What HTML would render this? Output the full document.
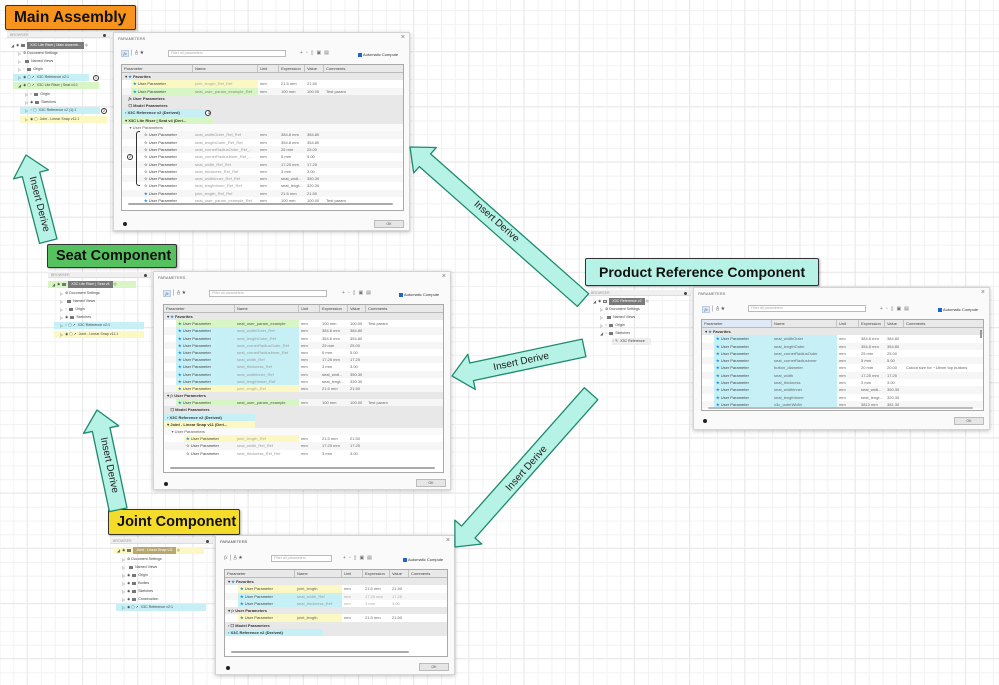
<!DOCTYPE html>
<html><head><meta charset="utf-8">
<style>
*{box-sizing:border-box;margin:0;padding:0}
body{width:999px;height:685px;overflow:hidden;position:relative;font-family:"Liberation Sans",sans-serif;background:#fff;
background-image:linear-gradient(#e9e9e9 1.2px,transparent 1.2px),linear-gradient(90deg,#e9e9e9 1.2px,transparent 1.2px),linear-gradient(#f2f2f2 1px,transparent 1px),linear-gradient(90deg,#f2f2f2 1px,transparent 1px);
background-size:55.2px 55.2px,55.2px 55.2px,13.8px 13.8px,13.8px 13.8px;
background-position:0 51px,26.8px 0,0 10.1px,13.3px 0}
.lbl{position:absolute;border:1.5px solid #333;border-radius:2px;font-weight:bold;color:#111;display:flex;align-items:center;padding-left:8px;box-shadow:1px 1px 2px rgba(0,0,0,.3)}
.dlg{position:absolute;background:#fafafa;border:1px solid #d4d4d4;box-shadow:0 1px 4px rgba(0,0,0,.25);font-size:4px;color:#555}
.dlg .ttl{position:absolute;left:4px;top:3px;font-size:4px;color:#666}
.dlg .x{position:absolute;right:4px;top:1px;font-size:7px;color:#777}
.tb{position:absolute;height:8px;font-size:5px;color:#555;display:flex;align-items:center}
.fx{width:8px;height:7px;background:#dbe8f6;border:1px solid #b9cde6;font-style:italic;font-size:4.5px;text-align:center;line-height:6px;color:#555;font-family:"Liberation Serif",serif}
.filt{position:absolute;height:7px;border:1px solid #bbb;background:#fff;font-size:3.6px;color:#aaa;padding-left:2px;line-height:5px}
.ac{position:absolute;font-size:4px;color:#333;display:flex;align-items:center}
.ac b{display:inline-block;width:4px;height:4px;background:#1e66c8;margin-right:1px}
.tbl{position:absolute;background:#fff;border:1px solid #a9a9a9;overflow:hidden}
.hd{display:flex;height:8px;background:#e9e9e9;border-bottom:1px solid #bbb;font-size:4px;line-height:8px;color:#444}
.hd span{border-right:1px solid #c4c4c4;padding-left:2px;overflow:hidden;white-space:nowrap}
.r{display:flex;font-size:4px;color:#666;white-space:nowrap}
.r:nth-child(odd){background:#f6f6f6}
.r span{overflow:hidden;padding-left:2px}
.r .c1{display:flex;padding-left:0;color:#444}
.r .c1 i{font-style:normal;display:block;flex:1;padding-left:2px}
.s{background:#e8e8e8!important;color:#333;font-weight:bold}
.s span{overflow:visible}
.st{color:#1f8fe0}
.so{color:#777}
.hy{background:#fbf8c4!important}.hg{background:#d8f5c6!important}.hc{background:#c6f0f6!important}
.ok{position:absolute;height:8px;background:#e6e6e6;border:1px solid #bbb;font-size:3.6px;text-align:center;line-height:7px;color:#555}
.info{position:absolute;width:4px;height:4px;border-radius:50%;background:#222}
.sb{position:absolute;height:2px;background:#aaa;border-radius:1px}
.br{position:absolute;font-size:3.6px;color:#444}
.br .h{height:6px;background:#f0f0f0;border-bottom:1px solid #ddd;color:#999;padding-left:3px;line-height:6px;position:relative}
.br .h:after{content:"";position:absolute;right:4px;top:1.5px;width:3px;height:3px;border-radius:50%;background:#444}
.br .t{position:absolute;height:7px;line-height:7px;white-space:nowrap;display:flex;align-items:center}
.br .t .ic{display:inline-block;width:4px;height:3.5px;background:#777;margin:0 2px}
.br .t .tri{color:#666;font-size:4px;margin-right:2px}
.root{background:#7a7a7a;color:#fff;padding:0 3px}
.circ{display:inline-block;width:6px;height:6px;border:0.7px solid #333;border-radius:50%;font-size:3.5px;line-height:5px;text-align:center;color:#222;background:#fff}
</style></head><body>

<div class="lbl" style="left:5px;top:5px;width:131px;height:25px;background:#f7941e;font-size:15.5px">Main Assembly</div>
<div class="lbl" style="left:47px;top:244px;width:130px;height:24px;background:#56c15f;font-size:14.5px">Seat Component</div>
<div class="lbl" style="left:585px;top:258px;width:234px;height:28px;background:#b7f2e6;font-size:14px;padding-left:13px">Product Reference Component</div>
<div class="lbl" style="left:108px;top:509px;width:132px;height:26px;background:#f6dc2a;font-size:14.5px">Joint Component</div>

<div class="br" style="left:7px;top:32px;width:103px;height:93px">
<div class="h">BROWSER</div>
<div class="t" style="left:4px;top:10px"><span class="tri">◢</span>◉<span class="ic"></span><span class="root">X3C Lite Riser | Main Assemb...</span>&nbsp;◎</div>
<div class="t" style="left:11px;top:18px"><span class="tri">▷</span>⚙&nbsp;Document Settings</div>
<div class="t" style="left:11px;top:26px"><span class="tri">▷</span><span class="ic"></span>Named Views</div>
<div class="t" style="left:11px;top:34px"><span class="tri">▷</span>◌<span class="ic"></span>Origin</div>
<div class="t hc" style="left:6px;top:42px;width:76px;padding-left:5px"><span class="tri">▷</span>◉ ▢ ➚&nbsp;&nbsp;X3C Reference v2:1</div>
<div class="t" style="left:86px;top:42px"><span class="circ">1</span></div>
<div class="t hg" style="left:6px;top:50px;width:86px;padding-left:5px"><span class="tri">◢</span>◉ ▢ ➚&nbsp;&nbsp;X3C Lite Riser | Seat v4:1</div>
<div class="t" style="left:18px;top:59px"><span class="tri">▷</span>◌<span class="ic"></span>Origin</div>
<div class="t" style="left:18px;top:67px"><span class="tri">▷</span>◉<span class="ic"></span>Sketches</div>
<div class="t hc" style="left:13px;top:75px;width:80px;padding-left:5px"><span class="tri">▷</span>◌ ▢&nbsp;&nbsp;X3C Reference v2 (1):1</div>
<div class="t" style="left:94px;top:75px"><span class="circ">2</span></div>
<div class="t hy" style="left:13px;top:84px;width:87px;padding-left:5px"><span class="tri">▷</span>◉ ▢&nbsp;&nbsp;Joint - Linear Snap v11:1</div>
</div>

<style>
#d1 .c1{width:71px}#d1 .c2{width:65px}#d1 .c3{width:21px}#d1 .c4{width:26px}#d1 .c5{width:19px}#d1 .c6{flex:1}
#d1 .r{height:7.3px;line-height:7.3px}
</style>
<div class="dlg" id="d1" style="left:113px;top:32px;width:297px;height:199px">
<div class="ttl">PARAMETERS</div><div class="x">×</div>
<div class="tb" style="left:7px;top:16px"><div class="fx">fx</div>&nbsp;│&nbsp;<span style="color:#888">A̲</span>&nbsp;★</div>
<div class="filt" style="left:54px;top:17px;width:118px">Filter all parameters</div>
<div class="tb" style="left:186px;top:16px;color:#777;letter-spacing:3px">+▫▯▣▤</div>
<div class="ac" style="left:244px;top:19px"><b></b>Automatic Compute</div>
<div class="tbl" style="left:7px;top:31px;width:283px;height:147px">
<div class="hd"><span class="c1" style="width:71px">Parameter</span><span style="width:65px">Name</span><span style="width:21px">Unit</span><span style="width:26px">Expression</span><span style="width:19px">Value</span><span style="flex:1;border:0">Comments</span></div>
<div>
<div class="r s"><span>&nbsp;▾ <b class="st">★</b> Favorites</span></div>
<div class="r"><span class="c1" style="padding-left:9px"><i class="hy"><b class="st">★</b> User Parameter</i></span><span class="c2 hy" style="color:#aaa">joint_length_Ref_Ref</span><span class="c3">mm</span><span class="c4">21.5 mm</span><span class="c5">21.50</span><span class="c6"></span></div>
<div class="r"><span class="c1" style="padding-left:9px"><i class="hg"><b class="st">★</b> User Parameter</i></span><span class="c2 hg" style="color:#888">seat_user_param_example_Ref</span><span class="c3">mm</span><span class="c4">100 mm</span><span class="c5">100.00</span><span class="c6">Test param</span></div>
<div class="r s"><span>&nbsp;&nbsp;&nbsp;&nbsp;<i style="font-family:serif">fx</i> User Parameters</span></div>
<div class="r s"><span>&nbsp;&nbsp;&nbsp;&nbsp;☐ Model Parameters</span></div>
<div class="r s" style="position:relative"><span class="hc" style="width:84px">&nbsp;› X3C Reference v2 (Derived)</span><span style="position:absolute;left:83px;top:0.5px" class="circ">1</span></div>
<div class="r s"><span class="hg" style="width:91px">&nbsp;▾ X3C Lite Riser | Seat v4 (Deri...</span></div>
<div class="r" style="background:#fafafa"><span>&nbsp;&nbsp;&nbsp;&nbsp;&nbsp;▾ User Parameters</span></div>
<div class="r"><span class="c1" style="padding-left:20px"><i><b class="so">☆</b> User Parameter</i></span><span class="c2" style="color:#999">seat_widthOuter_Ref_Ref</span><span class="c3">mm</span><span class="c4">384.8 mm</span><span class="c5">384.80</span><span class="c6"></span></div>
<div class="r"><span class="c1" style="padding-left:20px"><i><b class="so">☆</b> User Parameter</i></span><span class="c2" style="color:#999">seat_lengthOuter_Ref_Ref</span><span class="c3">mm</span><span class="c4">354.8 mm</span><span class="c5">354.80</span><span class="c6"></span></div>
<div class="r"><span class="c1" style="padding-left:20px"><i><b class="so">☆</b> User Parameter</i></span><span class="c2" style="color:#999">seat_cornerRadiusOuter_Ref_...</span><span class="c3">mm</span><span class="c4">25 mm</span><span class="c5">25.00</span><span class="c6"></span></div>
<div class="r"><span class="c1" style="padding-left:20px"><i><b class="so">☆</b> User Parameter</i></span><span class="c2" style="color:#999">seat_cornerRadiusInner_Ref_...</span><span class="c3">mm</span><span class="c4">5 mm</span><span class="c5">5.00</span><span class="c6"></span></div>
<div class="r"><span class="c1" style="padding-left:20px"><i><b class="so">☆</b> User Parameter</i></span><span class="c2" style="color:#999">seat_width_Ref_Ref</span><span class="c3">mm</span><span class="c4">17.25 mm</span><span class="c5">17.25</span><span class="c6"></span></div>
<div class="r"><span class="c1" style="padding-left:20px"><i><b class="so">☆</b> User Parameter</i></span><span class="c2" style="color:#999">seat_thickness_Ref_Ref</span><span class="c3">mm</span><span class="c4">3 mm</span><span class="c5">3.00</span><span class="c6"></span></div>
<div class="r"><span class="c1" style="padding-left:20px"><i><b class="so">☆</b> User Parameter</i></span><span class="c2" style="color:#999">seat_widthInner_Ref_Ref</span><span class="c3">mm</span><span class="c4">seat_widt...</span><span class="c5">350.30</span><span class="c6"></span></div>
<div class="r"><span class="c1" style="padding-left:20px"><i><b class="so">☆</b> User Parameter</i></span><span class="c2" style="color:#999">seat_lengthInner_Ref_Ref</span><span class="c3">mm</span><span class="c4">seat_lengt...</span><span class="c5">320.30</span><span class="c6"></span></div>
<div class="r"><span class="c1" style="padding-left:20px"><i><b class="st">★</b> User Parameter</i></span><span class="c2" style="color:#999">joint_length_Ref_Ref</span><span class="c3">mm</span><span class="c4">21.5 mm</span><span class="c5">21.50</span><span class="c6"></span></div>
<div class="r"><span class="c1" style="padding-left:20px"><i><b class="st">★</b> User Parameter</i></span><span class="c2" style="color:#999">seat_user_param_example_Ref</span><span class="c3">mm</span><span class="c4">100 mm</span><span class="c5">100.00</span><span class="c6">Test param</span></div>
</div>
<div class="sb" style="left:6px;bottom:5px;width:265px"></div>
</div>
<div style="position:absolute;left:22px;top:98px;width:4px;height:55px;border:0.8px solid #333;border-right:0;border-radius:3px 0 0 3px"></div>
<div style="position:absolute;left:13px;top:121px"><span class="circ">2</span></div>
<div class="info" style="left:9px;top:189px"></div>
<div class="ok" style="left:260px;top:187px;width:30px">OK</div>
</div>

<div class="br" style="left:48px;top:272px;width:103px;height:70px">
<div class="h">BROWSER</div>
<div class="t hg" style="left:0;top:9px;width:88px;padding-left:4px"><span class="tri">◢</span>◉<span class="ic"></span><span class="root">X3C Lite Riser | Seat v4</span>&nbsp;◎</div>
<div class="t" style="left:12px;top:18px"><span class="tri">▷</span>⚙&nbsp;Document Settings</div>
<div class="t" style="left:12px;top:26px"><span class="tri">▷</span><span class="ic"></span>Named Views</div>
<div class="t" style="left:12px;top:34px"><span class="tri">▷</span>◌<span class="ic"></span>Origin</div>
<div class="t" style="left:12px;top:42px"><span class="tri">▷</span>◉<span class="ic"></span>Sketches</div>
<div class="t hc" style="left:6px;top:50px;width:90px;padding-left:6px"><span class="tri">▷</span>◌ ▢ ➚&nbsp;&nbsp;X3C Reference v2:1</div>
<div class="t hy" style="left:6px;top:59px;width:90px;padding-left:6px"><span class="tri">▷</span>◉ ▢ ➚&nbsp;&nbsp;Joint - Linear Snap v11:1</div>
</div>

<style>
#d2 .c1{width:71px}#d2 .c2{width:64px}#d2 .c3{width:21px}#d2 .c4{width:28px}#d2 .c5{width:18px}#d2 .c6{flex:1}
#d2 .r{height:7.2px;line-height:7.2px}
</style>
<div class="dlg" id="d2" style="left:153px;top:271px;width:298px;height:219px">
<div class="ttl">PARAMETERS</div><div class="x">×</div>
<div class="tb" style="left:9px;top:17px"><div class="fx">fx</div>&nbsp;│&nbsp;<span style="color:#888">A̲</span>&nbsp;★</div>
<div class="filt" style="left:55px;top:18px;width:118px">Filter all parameters</div>
<div class="tb" style="left:188px;top:17px;color:#777;letter-spacing:3px">+▫▯▣▤</div>
<div class="ac" style="left:245px;top:20px"><b></b>Automatic Compute</div>
<div class="tbl" style="left:9px;top:32px;width:281px;height:169px">
<div class="hd"><span style="width:71px">Parameter</span><span style="width:64px">Name</span><span style="width:21px">Unit</span><span style="width:28px">Expression</span><span style="width:18px">Value</span><span style="flex:1;border:0">Comments</span></div>
<div>
<div class="r s"><span>&nbsp;▾ <b class="st">★</b> Favorites</span></div>
<div class="r"><span class="c1" style="padding-left:12px"><i class="hg"><b class="st">★</b> User Parameter</i></span><span class="c2 hg" style="color:#555">seat_user_param_example</span><span class="c3">mm</span><span class="c4">100 mm</span><span class="c5">100.00</span><span class="c6">Test param</span></div>
<div class="r"><span class="c1" style="padding-left:12px"><i class="hc"><b class="st">★</b> User Parameter</i></span><span class="c2 hc" style="color:#999">seat_widthOuter_Ref</span><span class="c3">mm</span><span class="c4">384.8 mm</span><span class="c5">384.80</span><span class="c6"></span></div>
<div class="r"><span class="c1" style="padding-left:12px"><i class="hc"><b class="st">★</b> User Parameter</i></span><span class="c2 hc" style="color:#999">seat_lengthOuter_Ref</span><span class="c3">mm</span><span class="c4">354.8 mm</span><span class="c5">354.80</span><span class="c6"></span></div>
<div class="r"><span class="c1" style="padding-left:12px"><i class="hc"><b class="st">★</b> User Parameter</i></span><span class="c2 hc" style="color:#999">seat_cornerRadiusOuter_Ref</span><span class="c3">mm</span><span class="c4">25 mm</span><span class="c5">25.00</span><span class="c6"></span></div>
<div class="r"><span class="c1" style="padding-left:12px"><i class="hc"><b class="st">★</b> User Parameter</i></span><span class="c2 hc" style="color:#999">seat_cornerRadiusInner_Ref</span><span class="c3">mm</span><span class="c4">5 mm</span><span class="c5">5.00</span><span class="c6"></span></div>
<div class="r"><span class="c1" style="padding-left:12px"><i class="hc"><b class="st">★</b> User Parameter</i></span><span class="c2 hc" style="color:#999">seat_width_Ref</span><span class="c3">mm</span><span class="c4">17.25 mm</span><span class="c5">17.25</span><span class="c6"></span></div>
<div class="r"><span class="c1" style="padding-left:12px"><i class="hc"><b class="st">★</b> User Parameter</i></span><span class="c2 hc" style="color:#999">seat_thickness_Ref</span><span class="c3">mm</span><span class="c4">3 mm</span><span class="c5">3.00</span><span class="c6"></span></div>
<div class="r"><span class="c1" style="padding-left:12px"><i class="hc"><b class="st">★</b> User Parameter</i></span><span class="c2 hc" style="color:#999">seat_widthInner_Ref</span><span class="c3">mm</span><span class="c4">seat_widt...</span><span class="c5">350.30</span><span class="c6"></span></div>
<div class="r"><span class="c1" style="padding-left:12px"><i class="hc"><b class="st">★</b> User Parameter</i></span><span class="c2 hc" style="color:#999">seat_lengthInner_Ref</span><span class="c3">mm</span><span class="c4">seat_lengt...</span><span class="c5">320.30</span><span class="c6"></span></div>
<div class="r"><span class="c1" style="padding-left:12px"><i class="hy"><b class="st">★</b> User Parameter</i></span><span class="c2 hy" style="color:#aaa">joint_length_Ref</span><span class="c3">mm</span><span class="c4">21.5 mm</span><span class="c5">21.50</span><span class="c6"></span></div>
<div class="r s"><span>&nbsp;▾ <i style="font-family:serif;font-weight:normal">fx</i> User Parameters</span></div>
<div class="r"><span class="c1" style="padding-left:12px"><i class="hg"><b class="st">★</b> User Parameter</i></span><span class="c2 hg" style="color:#555">seat_user_param_example</span><span class="c3">mm</span><span class="c4">100 mm</span><span class="c5">100.00</span><span class="c6">Test param</span></div>
<div class="r s"><span>&nbsp;&nbsp;&nbsp;&nbsp;☐ Model Parameters</span></div>
<div class="r s"><span class="hc" style="width:91px">&nbsp;› X3C Reference v2 (Derived)</span></div>
<div class="r s"><span class="hy" style="width:91px">&nbsp;▾ Joint - Linear Snap v11 (Deri...</span></div>
<div class="r" style="background:#fafafa"><span>&nbsp;&nbsp;&nbsp;&nbsp;&nbsp;▾ User Parameters</span></div>
<div class="r"><span class="c1" style="padding-left:20px"><i class="hy"><b class="st">★</b> User Parameter</i></span><span class="c2 hy" style="color:#aaa">joint_length_Ref</span><span class="c3">mm</span><span class="c4">21.5 mm</span><span class="c5">21.50</span><span class="c6"></span></div>
<div class="r"><span class="c1" style="padding-left:20px"><i><b class="so">☆</b> User Parameter</i></span><span class="c2" style="color:#999">seat_width_Ref_Ref</span><span class="c3">mm</span><span class="c4">17.25 mm</span><span class="c5">17.25</span><span class="c6"></span></div>
<div class="r"><span class="c1" style="padding-left:20px"><i><b class="so">☆</b> User Parameter</i></span><span class="c2" style="color:#999">seat_thickness_Ref_Ref</span><span class="c3">mm</span><span class="c4">3 mm</span><span class="c5">3.00</span><span class="c6"></span></div>
</div>
<div class="sb" style="left:6px;bottom:3px;width:265px"></div>
</div>
<div class="info" style="left:10px;top:210px"></div>
<div class="ok" style="left:262px;top:207px;width:30px">OK</div>
</div>

<div class="br" style="left:588px;top:290px;width:103px;height:60px">
<div class="h">BROWSER</div>
<div class="t" style="left:5px;top:8px"><span class="tri">◢</span>◉<span class="ic" style="background:#ddd;border:0.5px solid #777"></span><span class="root">X3C Reference v2</span>&nbsp;◎</div>
<div class="t" style="left:12px;top:16px"><span class="tri">▷</span>⚙&nbsp;Document Settings</div>
<div class="t" style="left:12px;top:24px"><span class="tri">▷</span><span class="ic"></span>Named Views</div>
<div class="t" style="left:12px;top:32px"><span class="tri">▷</span>◌<span class="ic"></span>Origin</div>
<div class="t" style="left:12px;top:40px"><span class="tri">◢</span>◌<span class="ic"></span>Sketches</div>
<div class="t" style="left:24px;top:48px;background:#eee;padding-right:6px">◌ ✎&nbsp;&nbsp;X3C Reference</div>
</div>

<style>
#d3 .c1{width:70px}#d3 .c2{width:65px}#d3 .c3{width:22px}#d3 .c4{width:26px}#d3 .c5{width:19px}#d3 .c6{flex:1}
#d3 .r{height:7.3px;line-height:7.3px}
</style>
<div class="dlg" id="d3" style="left:693px;top:287px;width:297px;height:143px">
<div class="ttl">PARAMETERS</div><div class="x">×</div>
<div class="tb" style="left:8px;top:17px"><div class="fx">fx</div>&nbsp;│&nbsp;<span style="color:#888">A̲</span>&nbsp;★</div>
<div class="filt" style="left:54px;top:17px;width:118px">Filter all parameters</div>
<div class="tb" style="left:186px;top:17px;color:#777;letter-spacing:3px">+▫▯▣▤</div>
<div class="ac" style="left:244px;top:19px"><b></b>Automatic Compute</div>
<div class="tbl" style="left:7px;top:31px;width:283px;height:92px">
<div class="hd"><span style="width:70px;background:#dfeaf6">Parameter</span><span style="width:65px">Name</span><span style="width:22px">Unit</span><span style="width:26px">Expression</span><span style="width:19px">Value</span><span style="flex:1;border:0">Comments</span></div>
<div>
<div class="r s"><span>&nbsp;▾ <b class="st">★</b> Favorites</span></div>
<div class="r"><span class="c1" style="padding-left:12px"><i class="hc"><b class="st">★</b> User Parameter</i></span><span class="c2 hc">seat_widthOuter</span><span class="c3">mm</span><span class="c4">384.8 mm</span><span class="c5">384.80</span><span class="c6"></span></div>
<div class="r"><span class="c1" style="padding-left:12px"><i class="hc"><b class="st">★</b> User Parameter</i></span><span class="c2 hc">seat_lengthOuter</span><span class="c3">mm</span><span class="c4">354.8 mm</span><span class="c5">354.80</span><span class="c6"></span></div>
<div class="r"><span class="c1" style="padding-left:12px"><i class="hc"><b class="st">★</b> User Parameter</i></span><span class="c2 hc">seat_cornerRadiusOuter</span><span class="c3">mm</span><span class="c4">25 mm</span><span class="c5">25.00</span><span class="c6"></span></div>
<div class="r"><span class="c1" style="padding-left:12px"><i class="hc"><b class="st">★</b> User Parameter</i></span><span class="c2 hc">seat_cornerRadiusInner</span><span class="c3">mm</span><span class="c4">5 mm</span><span class="c5">5.00</span><span class="c6"></span></div>
<div class="r"><span class="c1" style="padding-left:12px"><i class="hc"><b class="st">★</b> User Parameter</i></span><span class="c2 hc">button_diameter</span><span class="c3">mm</span><span class="c4">20 mm</span><span class="c5">20.00</span><span class="c6">Cutout size for ~18mm top buttons</span></div>
<div class="r"><span class="c1" style="padding-left:12px"><i class="hc"><b class="st">★</b> User Parameter</i></span><span class="c2 hc">seat_width</span><span class="c3">mm</span><span class="c4">17.25 mm</span><span class="c5">17.25</span><span class="c6"></span></div>
<div class="r"><span class="c1" style="padding-left:12px"><i class="hc"><b class="st">★</b> User Parameter</i></span><span class="c2 hc">seat_thickness</span><span class="c3">mm</span><span class="c4">3 mm</span><span class="c5">3.00</span><span class="c6"></span></div>
<div class="r"><span class="c1" style="padding-left:12px"><i class="hc"><b class="st">★</b> User Parameter</i></span><span class="c2 hc">seat_widthInner</span><span class="c3">mm</span><span class="c4">seat_widt...</span><span class="c5">350.30</span><span class="c6"></span></div>
<div class="r"><span class="c1" style="padding-left:12px"><i class="hc"><b class="st">★</b> User Parameter</i></span><span class="c2 hc">seat_lengthInner</span><span class="c3">mm</span><span class="c4">seat_lengt...</span><span class="c5">320.30</span><span class="c6"></span></div>
<div class="r"><span class="c1" style="padding-left:12px"><i class="hc"><b class="st">★</b> User Parameter</i></span><span class="c2 hc">x3c_outerWidth</span><span class="c3">mm</span><span class="c4">3813 mm</span><span class="c5">381.30</span><span class="c6"></span></div>
</div>
<div class="sb" style="left:6px;bottom:1px;width:265px;background:#bbb"></div>
<div style="position:absolute;right:1px;top:10px;width:2px;height:8px;background:#999"></div>
</div>
<div class="info" style="left:9px;top:131px"></div>
<div class="ok" style="left:260px;top:129px;width:30px">OK</div>
</div>

<div class="br" style="left:110px;top:538px;width:103px;height:76px">
<div class="h">BROWSER</div>
<div class="t hy" style="left:4px;top:9px;width:90px;padding-left:3px"><span class="tri">◢</span>◉<span class="ic"></span><span class="root" style="background:#b8a870">Joint - Linear Snap v11</span>&nbsp;◎</div>
<div class="t" style="left:12px;top:18px"><span class="tri">▷</span>⚙&nbsp;Document Settings</div>
<div class="t" style="left:12px;top:26px"><span class="tri">▷</span><span class="ic"></span>Named Views</div>
<div class="t" style="left:12px;top:34px"><span class="tri">▷</span>◉<span class="ic"></span>Origin</div>
<div class="t" style="left:12px;top:42px"><span class="tri">▷</span>◉<span class="ic"></span>Bodies</div>
<div class="t" style="left:12px;top:50px"><span class="tri">▷</span>◉<span class="ic"></span>Sketches</div>
<div class="t" style="left:12px;top:58px"><span class="tri">▷</span>◉<span class="ic"></span>Construction</div>
<div class="t hc" style="left:6px;top:66px;width:90px;padding-left:6px"><span class="tri">▷</span>◉ ▢ ➚&nbsp;&nbsp;X3C Reference v2:1</div>
</div>

<style>
#d4 .c1{width:70px}#d4 .c2{width:47px}#d4 .c3{width:21px}#d4 .c4{width:27px}#d4 .c5{width:19px}#d4 .c6{flex:1}
#d4 .r{height:7.3px;line-height:7.3px}
</style>
<div class="dlg" id="d4" style="left:215px;top:535px;width:240px;height:140px">
<div class="ttl" style="color:#444">PARAMETERS</div><div class="x">×</div>
<div class="tb" style="left:8px;top:18px"><span style="font-family:serif;font-style:italic;color:#777">fx</span>&nbsp;│&nbsp;<span style="color:#888">A̲</span>&nbsp;★</div>
<div class="filt" style="left:55px;top:19px;width:61px">Filter all parameters</div>
<div class="tb" style="left:127px;top:18px;color:#777;letter-spacing:3px">+▫▯▣▤</div>
<div class="ac" style="left:187px;top:21px"><b></b>Automatic Compute</div>
<div class="tbl" style="left:8px;top:33px;width:224px;height:88px">
<div class="hd"><span style="width:70px">Parameter</span><span style="width:47px">Name</span><span style="width:21px">Unit</span><span style="width:27px">Expression</span><span style="width:19px">Value</span><span style="flex:1;border:0">Comments</span></div>
<div>
<div class="r s"><span>&nbsp;▾ <b class="st">★</b> Favorites</span></div>
<div class="r"><span class="c1" style="padding-left:13px"><i class="hy"><b class="st">★</b> User Parameter</i></span><span class="c2 hy">joint_length</span><span class="c3">mm</span><span class="c4">21.5 mm</span><span class="c5">21.50</span><span class="c6"></span></div>
<div class="r"><span class="c1" style="padding-left:13px"><i class="hc"><b class="st">★</b> User Parameter</i></span><span class="c2 hc" style="color:#999">seat_width_Ref</span><span class="c3" style="color:#aaa">mm</span><span class="c4" style="color:#aaa">17.25 mm</span><span class="c5" style="color:#aaa">17.25</span><span class="c6"></span></div>
<div class="r"><span class="c1" style="padding-left:13px"><i class="hc"><b class="st">★</b> User Parameter</i></span><span class="c2 hc" style="color:#999">seat_thickness_Ref</span><span class="c3" style="color:#aaa">mm</span><span class="c4" style="color:#aaa">3 mm</span><span class="c5" style="color:#aaa">3.00</span><span class="c6"></span></div>
<div class="r s"><span>&nbsp;▾ <i style="font-family:serif;font-weight:normal">fx</i> User Parameters</span></div>
<div class="r"><span class="c1" style="padding-left:13px"><i class="hy"><b class="st">★</b> User Parameter</i></span><span class="c2 hy">joint_length</span><span class="c3">mm</span><span class="c4">21.5 mm</span><span class="c5">21.50</span><span class="c6"></span></div>
<div class="r s"><span>&nbsp;› ☐ Model Parameters</span></div>
<div class="r s"><span class="hc" style="width:98px">&nbsp;› X3C Reference v2 (Derived)</span></div>
</div>
<div class="sb" style="left:6px;bottom:3px;width:178px"></div>
</div>
<div class="info" style="left:10px;top:130px"></div>
<div class="ok" style="left:203px;top:127px;width:30px">OK</div>
</div>

<svg style="position:absolute;left:0;top:0" width="999" height="685">
<defs>
<style>.ar{fill:#b6f2e5;stroke:#1e8a6e;stroke-width:1.3;stroke-linejoin:round}.at{font-family:"Liberation Sans",sans-serif;font-size:10px;fill:#222}</style>
</defs>
<g transform="translate(410,147) rotate(221.5)">
<polygon class="ar" points="-231,-8.5 -20,-8.5 -20,-17 0,0 -20,17 -20,8.5 -231,8.5"/>
</g>
<text class="at" transform="translate(497,221) rotate(41.5)" text-anchor="middle" dy="3.5">Insert Derive</text>
<g transform="translate(452,376) rotate(168)">
<polygon class="ar" points="-135,-9 -20,-9 -20,-18 0,0 -20,18 -20,9 -135,9"/>
</g>
<text class="at" transform="translate(521,361) rotate(-12)" text-anchor="middle" dy="3.5">Insert Derive</text>
<g transform="translate(455,547) rotate(131.6)">
<polygon class="ar" points="-205,-9 -20,-9 -20,-18 0,0 -20,18 -20,9 -205,9"/>
</g>
<text class="at" transform="translate(526,468) rotate(-48.4)" text-anchor="middle" dy="3.5">Insert Derive</text>
<g transform="translate(26,155) rotate(255.5)">
<polygon class="ar" points="-89,-9 -20,-9 -20,-18 0,0 -20,18 -20,9 -89,9"/>
</g>
<text class="at" transform="translate(40,204) rotate(75.5)" text-anchor="middle" dy="3.5">Insert Derive</text>
<g transform="translate(97,410) rotate(258)">
<polygon class="ar" points="-102,-9 -20,-9 -20,-18 0,0 -20,18 -20,9 -102,9"/>
</g>
<text class="at" transform="translate(110,465) rotate(78)" text-anchor="middle" dy="3.5">Insert Derive</text>
</svg>

</body></html>
